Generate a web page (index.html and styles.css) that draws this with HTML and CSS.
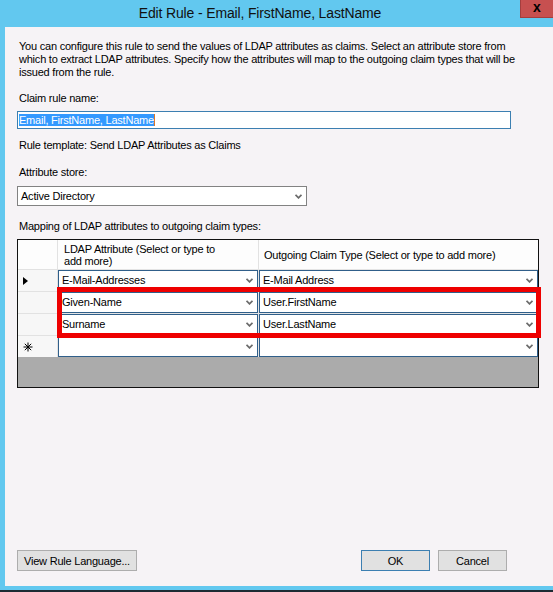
FILE: index.html
```html
<!DOCTYPE html>
<html>
<head>
<meta charset="utf-8">
<title>Edit Rule</title>
<link rel="stylesheet" href="styles.css">
</head>
<body>
<div class="win">
  <div class="titlebar">
    <div class="title">Edit Rule - Email, FirstName, LastName</div>
    <div class="close">x</div>
  </div>
  <div class="frame">
    <div class="client">
      <div class="intro">You can configure this rule to send the values of LDAP attributes as claims. Select an attribute store from<br>which to extract LDAP attributes. Specify how the attributes will map to the outgoing claim types that will be<br>issued from the rule.</div>
      <div class="label l-name">Claim rule name:</div>
      <div class="textbox"><span class="sel">Email, FirstName, LastName</span></div>
      <div class="label l-tmpl">Rule template: Send LDAP Attributes as Claims</div>
      <div class="label l-store">Attribute store:</div>
      <div class="select">
        <span class="val">Active Directory</span>
        <svg class="chev" width="7" height="5" viewBox="0 0 7 5"><polyline points="0.5,0.8 3.5,3.8 6.5,0.8" fill="none" stroke="#6b6b6b" stroke-width="1.8"/></svg>
      </div>
      <div class="label l-map">Mapping of LDAP attributes to outgoing claim types:</div>
      <div class="grid">
        <div class="hrow">
          <div class="hcell corner"></div>
          <div class="hcell h1">LDAP Attribute (Select or type to<br>add more)</div>
          <div class="hcell h2">Outgoing Claim Type (Select or type to add more)</div>
        </div>
        <div class="drow">
          <div class="rhead"><svg width="5" height="8" viewBox="0 0 5 8"><polygon points="0,0 5,4 0,8" fill="#000"/></svg></div>
          <div class="dcell c1"><div class="combo"><span class="val">E-Mail-Addresses</span><svg class="chev" width="7" height="5" viewBox="0 0 7 5"><polyline points="0.5,0.8 3.5,3.8 6.5,0.8" fill="none" stroke="#6b6b6b" stroke-width="1.8"/></svg></div></div>
          <div class="dcell c2"><div class="combo"><span class="val">E-Mail Address</span><svg class="chev" width="7" height="5" viewBox="0 0 7 5"><polyline points="0.5,0.8 3.5,3.8 6.5,0.8" fill="none" stroke="#6b6b6b" stroke-width="1.8"/></svg></div></div>
        </div>
        <div class="drow">
          <div class="rhead"></div>
          <div class="dcell c1"><div class="combo"><span class="val">Given-Name</span><svg class="chev" width="7" height="5" viewBox="0 0 7 5"><polyline points="0.5,0.8 3.5,3.8 6.5,0.8" fill="none" stroke="#6b6b6b" stroke-width="1.8"/></svg></div></div>
          <div class="dcell c2"><div class="combo"><span class="val">User.FirstName</span><svg class="chev" width="7" height="5" viewBox="0 0 7 5"><polyline points="0.5,0.8 3.5,3.8 6.5,0.8" fill="none" stroke="#6b6b6b" stroke-width="1.8"/></svg></div></div>
        </div>
        <div class="drow">
          <div class="rhead"></div>
          <div class="dcell c1"><div class="combo"><span class="val">Surname</span><svg class="chev" width="7" height="5" viewBox="0 0 7 5"><polyline points="0.5,0.8 3.5,3.8 6.5,0.8" fill="none" stroke="#6b6b6b" stroke-width="1.8"/></svg></div></div>
          <div class="dcell c2"><div class="combo"><span class="val">User.LastName</span><svg class="chev" width="7" height="5" viewBox="0 0 7 5"><polyline points="0.5,0.8 3.5,3.8 6.5,0.8" fill="none" stroke="#6b6b6b" stroke-width="1.8"/></svg></div></div>
        </div>
        <div class="drow">
          <div class="rhead"><svg width="10" height="10" viewBox="0 0 10 10"><g stroke="#000" stroke-width="1"><line x1="5" y1="0.5" x2="5" y2="9.5"/><line x1="0.5" y1="5" x2="9.5" y2="5"/><line x1="1.8" y1="1.8" x2="8.2" y2="8.2"/><line x1="8.2" y1="1.8" x2="1.8" y2="8.2"/></g></svg></div>
          <div class="dcell c1"><div class="combo"><span class="val"></span><svg class="chev" width="7" height="5" viewBox="0 0 7 5"><polyline points="0.5,0.8 3.5,3.8 6.5,0.8" fill="none" stroke="#6b6b6b" stroke-width="1.8"/></svg></div></div>
          <div class="dcell c2"><div class="combo"><span class="val"></span><svg class="chev" width="7" height="5" viewBox="0 0 7 5"><polyline points="0.5,0.8 3.5,3.8 6.5,0.8" fill="none" stroke="#6b6b6b" stroke-width="1.8"/></svg></div></div>
        </div>
        <div class="empty"></div>
        <div class="highlight"></div>
      </div>
      <div class="buttons">
        <div class="btn b-view">View Rule Language...</div>
        <div class="btn b-ok">OK</div>
        <div class="btn b-cancel">Cancel</div>
      </div>
    </div>
  </div>
</div>
</body>
</html>
```
FILE: styles.css
```css
* { box-sizing: border-box; }
html, body { margin: 0; padding: 0; }
body {
  width: 553px;
  height: 592px;
  overflow: hidden;
  font-family: "Liberation Sans", Arial, sans-serif;
  font-size: 11px;
  letter-spacing: -0.22px;
  color: #000;
}
.win {
  width: 553px;
  height: 592px;
  background: #62c8ef;
  border-bottom: 2px solid #1d2b33;
  display: flex;
  flex-direction: column;
}
.titlebar {
  height: 27px;
  flex: none;
  display: flex;
  align-items: flex-start;
}
.title {
  flex: 1;
  text-align: center;
  font-family: "Liberation Sans", Arial, sans-serif;
  font-size: 14px;
  letter-spacing: -0.15px;
  line-height: 27px;
  color: #111;
}
.close {
  width: 33px;
  height: 18px;
  background: #c75050;
  border-left: 1px solid #a43e3e;
  border-bottom: 1px solid #a43e3e;
  font-family: "Liberation Sans", Arial, sans-serif;
  font-weight: bold;
  font-size: 14px;
  letter-spacing: 0;
  line-height: 15px;
  text-align: center;
  color: #000;
}
.frame {
  flex: 1;
  display: flex;
  padding: 0 0 4px 5px;
}
.client {
  flex: 1;
  background: #f6f3f6;
  padding: 13px 0 15px 12px;
  display: flex;
  flex-direction: column;
}
.intro {
  padding-left: 2px;
  line-height: 13px;
  white-space: nowrap;
}
.label {
  padding-left: 2px;
  line-height: 13px;
  white-space: nowrap;
}
.l-name { margin-top: 13px; }
.l-tmpl { margin-top: 10px; }
.l-store { margin-top: 14px; }
.l-map { margin-top: 14px; }
.textbox {
  margin-top: 6px;
  width: 494px;
  height: 18px;
  background: #fff;
  border: 1px solid #3c7fb1;
  padding: 2px 0 0 1px;
  display: flex;
}
.sel {
  background: #3399ff;
  color: #fff;
  line-height: 12px;
  height: 12px;
  border-right: 1px solid #d9772a;
  white-space: nowrap;
}
.select {
  margin-top: 7px;
  width: 290px;
  height: 20px;
  background: #fff;
  border: 1px solid #828282;
  display: flex;
  align-items: center;
  padding: 0 4px 0 3px;
}
.val {
  flex: 1;
  white-space: nowrap;
  line-height: 13px;
}
.chev { flex: none; display: block; }
.grid {
  position: relative;
  margin-top: 6px;
  width: 522px;
  height: 149px;
  border: 1px solid #111;
  background: #ababab;
  display: flex;
  flex-direction: column;
}
.hrow {
  height: 29px;
  display: flex;
  background: #fdfdfd;
}
.hcell {
  height: 29px;
  line-height: 12px;
  display: flex;
  align-items: center;
  white-space: nowrap;
}
.corner {
  width: 40px;
  border-right: 1px solid #e2e2e2;
}
.h1 {
  width: 201px;
  padding-left: 6px;
  border-right: 1px solid #e2e2e2;
}
.h2 {
  flex: 1;
  padding-left: 5px;
}
.drow {
  height: 22px;
  display: flex;
}
.rhead {
  width: 40px;
  height: 22px;
  background: #f7f7f7;
  border-top: 1px solid #e2e2e2;
  border-right: 1px solid #e2e2e2;
  display: flex;
  align-items: center;
  padding-left: 5px;
}
.dcell {
  height: 22px;
  padding-top: 1px;
  background: #e4e4e4;
}
.c1 { width: 201px; padding-right: 1px; }
.c2 { flex: 1; }
.combo {
  height: 21px;
  background: #fff;
  border: 1px solid #305f8a;
  display: flex;
  align-items: center;
  padding: 0 4px 0 3px;
}
.empty { flex: 1; }
.highlight {
  position: absolute;
  left: 39px;
  top: 47px;
  width: 484px;
  height: 51px;
  border: 5px solid #ee0000;
}
.buttons {
  margin-top: auto;
  width: 490px;
  height: 21px;
  display: flex;
}
.btn {
  height: 21px;
  background: #e1e1e1;
  border: 1px solid #adadad;
  display: flex;
  align-items: center;
  justify-content: center;
  white-space: nowrap;
}
.b-view { width: 120px; }
.b-ok { width: 69px; margin-left: auto; border-color: #3c7fb1; }
.b-cancel { width: 69px; margin-left: 8px; }
```
